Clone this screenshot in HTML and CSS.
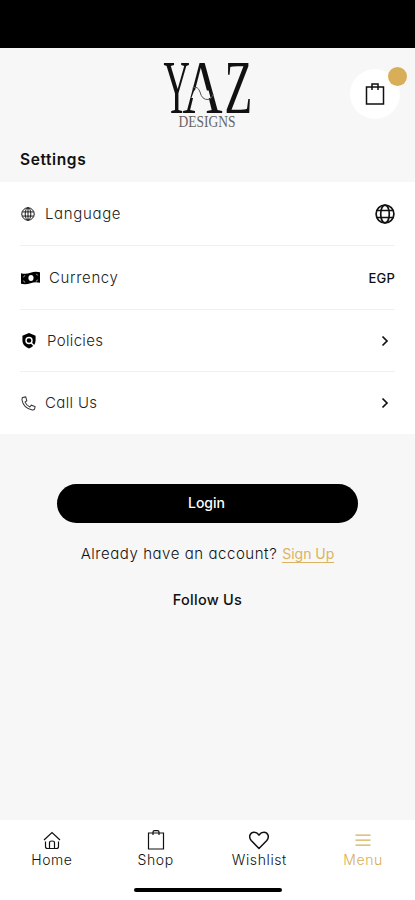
FILE: index.html
```html
<!DOCTYPE html>
<html lang="en">
<head>
<meta charset="utf-8">
<title>Settings</title>
<link rel="stylesheet" href="styles.css">
</head>
<body>
<div class="app">
  <div class="status"></div>
  <header class="header">
    <svg class="logo" viewBox="160 54 96 78" role="img" aria-label="YAZ Designs">
      <g class="logo-letters" font-size="76">
        <text transform="translate(163.600 112.500) scale(.48 1)">Y</text>
        <text transform="translate(182.500 112.500) scale(.73 1)">A</text>
        <text transform="translate(224.500 112.500) scale(.6 1)">Z</text>
      </g>
      <path class="logo-gap" d="M194.200 90.500H208.600L210.600 98H191.400Z"/>
      <path class="logo-wave" d="M192.500 88Q198 85.500 200 92Q202 100 208 99.500Q212 99 213 94"/>
      <text class="logo-sub" x="178.500" y="127" textLength="57" lengthAdjust="spacingAndGlyphs">DESIGNS</text>
    </svg>
    <div class="cart">
      <svg width="20" height="24" viewBox="0 0 20 24"><path d="M1.500 5H18.500V22H1.500ZM7 8V2H13V8"/></svg>
      <span class="badge"></span>
    </div>
  </header>
  <h1 class="title">Settings</h1>
  <main class="list">
    <div class="row row-language">
      <svg class="globe-sm" viewBox="0 0 20 20"><circle cx="10" cy="10" r="8.900"/><ellipse cx="10" cy="10" rx="4" ry="8.900"/><path d="M10 1V19M2 7H18M2 13H18"/></svg>
      <span class="label">Language</span>
      <svg class="globe" viewBox="0 0 20 20"><circle cx="10" cy="10" r="8.900"/><ellipse cx="10" cy="10" rx="4.300" ry="8.900"/><path d="M2 6.500H18M2 13.500H18"/></svg>
    </div>
    <div class="row row-currency">
      <svg class="cash" viewBox="0 0 20 14"><path d="M0 2Q5 3.500 10 1.500T20 1V12Q15 10.800 10 12.500T0 13Z"/><ellipse class="hole" cx="10.500" cy="7" rx="2.700" ry="3.100"/><path class="marks" d="M2 6Q4 6 4 4M2 10Q4 10 4 12M18 4Q16 4 16 2.500M18 9Q16 9 16 11"/></svg>
      <span class="label">Currency</span>
      <span class="value">EGP</span>
    </div>
    <div class="row row-policies">
      <svg class="shield" viewBox="0 0 14 17"><path d="M7 0L14 3V8Q14 14 7 16.500Q0 14 0 8V3Z"/><circle cx="7" cy="8" r="3.200"/><path class="tail" d="M9.200 10.300L12.300 13.500"/></svg>
      <span class="label label-tight">Policies</span>
      <svg class="chevron" viewBox="0 0 8 12"><path d="M1.500 1.500L6 6L1.500 10.500"/></svg>
    </div>
    <div class="row row-call">
      <svg class="phone" viewBox="0 0 16 16"><path d="M1.500 1.500L5 1L6.200 5L4.300 6.500Q5.800 10 9.500 11.700L11 9.800L15 11.200L14.500 14Q13.500 15.200 12 14.900Q2.500 13 1 4Z"/></svg>
      <span class="label label-tight">Call Us</span>
      <svg class="chevron" viewBox="0 0 8 12"><path d="M1.500 1.500L6 6L1.500 10.500"/></svg>
    </div>
  </main>
  <section class="account">
    <button class="login">Login</button>
    <p class="signup"><span class="question">Already have an account?</span><a>Sign Up</a></p>
    <h2 class="follow">Follow Us</h2>
  </section>
  <footer class="footer">
    <nav class="tabs">
      <div class="tab"><svg viewBox="0 0 20 20"><path d="M2 10L10 2.500L18 10M3.500 11.500V16.500Q3.500 18.500 5.500 18.500H14.500Q16.500 18.500 16.500 16.500V11.500M7.500 18.500V12.500Q7.500 11 10 11T12.500 12.500V18.500"/></svg><span>Home</span></div>
      <div class="tab"><svg viewBox="0 0 20 20"><path d="M2.500 3H17.500V19H2.500ZM7 5V2Q7 .6 8.500 .6H11.500Q13 .6 13 2V5"/></svg><span>Shop</span></div>
      <div class="tab"><svg class="heart" viewBox="0 0 20 20"><path d="M10 18.500L2.200 10.500C-1 6.500 1.500 2.200 5 2.200Q8 2.200 10 5Q12 2.200 15 2.200C18.500 2.200 21 6.500 17.800 10.500Z"/></svg><span>Wishlist</span></div>
      <div class="tab active"><svg viewBox="0 0 20 20"><path d="M2.500 5.200H17.500M2.500 10.200H17.500M2.500 15.200H17.500"/></svg><span>Menu</span></div>
    </nav>
    <div class="home-bar"></div>
  </footer>
</div>
</body>
</html>
```
FILE: styles.css
```css
* { box-sizing: border-box; }
body {
  margin: 0;
  background: #f7f7f7;
  color: #111;
  font: 300 15px/20px Inter, "Liberation Sans", sans-serif;
  font-feature-settings: "cv11" 1;
}
.app { height: 900px; display: flex; flex-direction: column; overflow: hidden; }
svg { display: block; flex: none; fill: none; stroke: #111; overflow: visible; }
.status { height: 48px; flex: none; background: #000; }

.header { position: relative; height: 94px; flex: none; display: flex; justify-content: center; }
.logo { width: 96px; height: 78px; margin-top: 6px; stroke: none; fill: #111; }
.logo-letters, .logo-sub { font-family: "Liberation Serif", serif; font-weight: 400; }
.logo-sub { font-size: 16px; fill: #666; }
.logo-gap { fill: #f7f7f7; }
.logo-wave { fill: none; stroke: #555; stroke-width: 1; }
.cart {
  position: absolute; left: 350px; top: 21px; width: 50px; height: 50px;
  border-radius: 50%; background: #fff; display: flex; align-items: center; justify-content: center;
}
.cart svg { stroke-width: 1.500; }
.badge {
  position: absolute; left: 38px; top: -2px; width: 19px; height: 19px;
  border-radius: 50%; background: #d8ae58;
}

.title { height: 40px; flex: none; margin: 0; padding: 8px 0 0 20px; font-size: 15.500px; font-weight: 600; letter-spacing: .6px; }

.list { flex: none; height: 252px; background: #fff; padding: 0 20px; display: flex; flex-direction: column; }
.row { display: flex; align-items: center; border-bottom: 1px solid #f0f0f0; height: 64px; padding-left: 1px; }
.row-policies { height: 62px; }
.row-call { height: 62px; border: 0; }
.label { color: #222; margin-right: auto; letter-spacing: .65px; }
.label-tight { letter-spacing: .35px; }
.globe-sm { width: 14px; height: 14px; margin-right: 10px; stroke-width: 1.400; }
.globe { width: 20px; height: 20px; stroke-width: 1.700; }
.cash { width: 19px; height: 14px; margin-right: 9px; fill: #000; stroke: none; }
.cash .hole { fill: #fff; }
.cash .marks { fill: none; stroke: #aaa; stroke-width: .8; }
.value { font-size: 13px; font-weight: 500; letter-spacing: .2px; }
.shield { width: 14px; height: 16px; margin: 0 11px 0 1px; fill: #000; stroke: none; }
.shield circle, .shield .tail { fill: none; stroke: #fff; stroke-width: 1.500; }
.phone { width: 15px; height: 15px; margin-right: 9px; stroke: #333; stroke-width: 1.100; }
.chevron { width: 8px; height: 12px; margin-right: 6px; stroke-width: 1.700; }

.account { flex: 1; display: flex; flex-direction: column; align-items: center; padding-top: 50px; }
.login {
  width: 301px; height: 39px; border: 0; border-radius: 20px; padding: 0 2px 2px 0;
  background: #000; color: #fff; font: inherit; font-size: 14px; font-weight: 500; font-feature-settings: inherit;
}
.signup { margin: 21px 0 0; display: flex; gap: 5px; font-size: 15px; white-space: nowrap; }
.question { letter-spacing: .55px; }
.signup a { color: #dcb360; font-size: 14px; font-weight: 400; border-bottom: 1px solid #dcb360; line-height: 20px; height: 19px; }
.follow { margin: 26px 0 0; font-size: 14.500px; font-weight: 500; letter-spacing: .25px; }

.footer { flex: none; height: 80px; background: #fff; display: flex; flex-direction: column; align-items: center; }
.tabs { width: 100%; height: 68px; display: grid; grid-template-columns: repeat(4, 1fr); }
.tab { display: flex; flex-direction: column; align-items: center; padding-top: 10px; font-size: 14px; letter-spacing: .6px; }
.tab svg { width: 20px; height: 20px; stroke-width: 1.200; }
.tab .heart { stroke-width: 1.500; }
.active { color: #d8ae58; }
.active svg { stroke: #d8ae58; }
.home-bar { width: 148px; height: 4px; border-radius: 2px; background: #000; }
```
